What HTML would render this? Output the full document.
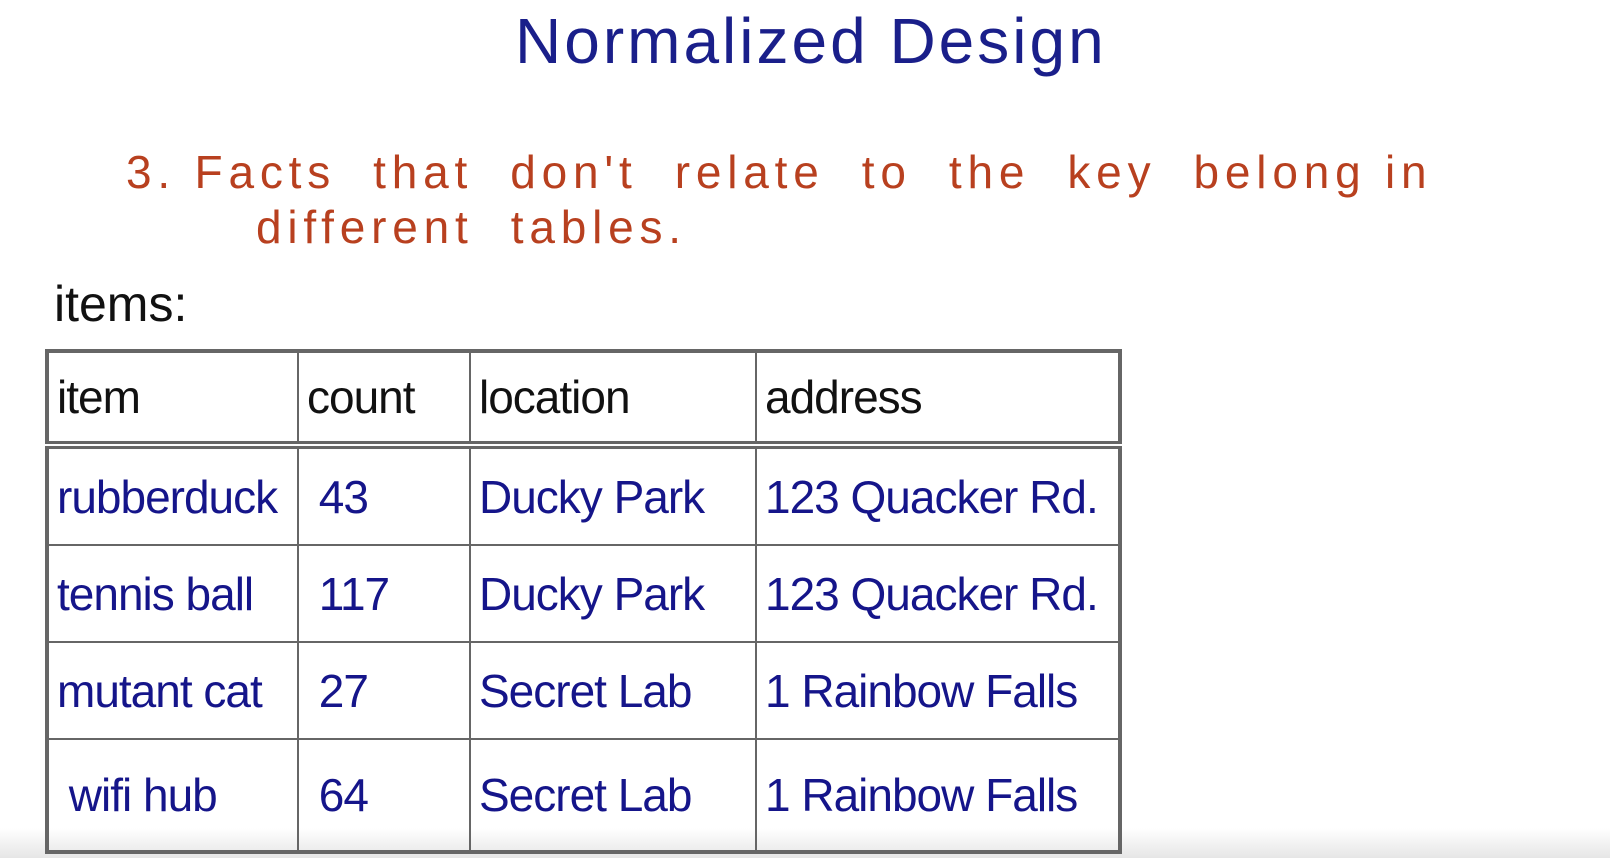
<!DOCTYPE html>
<html><head><style>
body{margin:0;width:1610px;height:858px;background:#fff;overflow:hidden;position:relative;font-family:"Liberation Sans",sans-serif}
.t{position:absolute;white-space:nowrap}
.title{left:515px;top:4px;font-size:64px;color:#1a1f8a;letter-spacing:3px}
.red{color:#b8401f;font-size:46px;letter-spacing:5.8px}
.blk{color:#111;font-size:50px}
table{position:absolute;left:45px;top:349px;border-collapse:collapse;border:4px solid #666}
td{border:2px solid #666;padding:0 0 0 8px;font-size:46px;color:#15158a;height:95px;vertical-align:middle;white-space:nowrap;overflow:hidden;letter-spacing:-1px}
tr.h td{color:#111;height:88px;border-bottom:8px double #666}
.fade{position:absolute;left:0;right:0;bottom:0;height:30px;background:linear-gradient(#fff,#e6e6e6)}
</style></head><body>
<div class="fade"></div>
<div class="t title">Normalized Design</div>
<div class="t red" style="left:126px;top:145px">3. Facts&nbsp; that&nbsp; don't&nbsp; relate&nbsp; to&nbsp; the&nbsp; key&nbsp; belong in</div>
<div class="t red" style="left:256px;top:200px">different&nbsp; tables.</div>
<div class="t blk" style="left:54px;top:275px">items:</div>
<table>
<tr class="h"><td style="width:240px">item</td><td style="width:162px">count</td><td style="width:276px">location</td><td style="width:353px">address</td></tr>
<tr><td>rubberduck</td><td>&nbsp;43</td><td>Ducky Park</td><td>123 Quacker Rd.</td></tr>
<tr><td>tennis ball</td><td>&nbsp;117</td><td>Ducky Park</td><td>123 Quacker Rd.</td></tr>
<tr><td>mutant cat</td><td>&nbsp;27</td><td>Secret Lab</td><td>1 Rainbow Falls</td></tr>
<tr><td style="height:110px">&nbsp;wifi hub</td><td>&nbsp;64</td><td>Secret Lab</td><td>1 Rainbow Falls</td></tr>
</table>
</body></html>
